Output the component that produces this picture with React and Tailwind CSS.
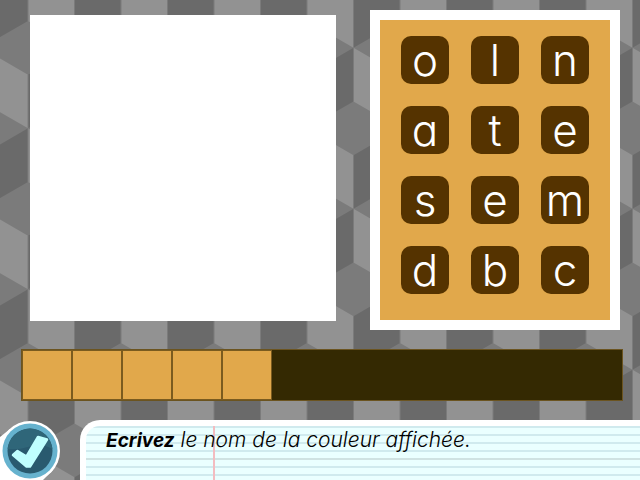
const ROWS = ["oln", "ate", "sem", "dbc"];
const CELLS = 12;
const FILLED = 5;
const LINES = [0, 8, 16, 24, 32, 40, 48];

function CubeBackdrop() {
  return (
    <svg className="absolute inset-0 -z-10 h-full w-full" aria-hidden="true">
      <defs>
        <pattern id="cubes" width="93" height="161" x="28" y="21" patternUnits="userSpaceOnUse">
          <rect width="93" height="161" fill="#7b7b7b" />
          <g fill="#6a6a6a">
            <path d="M0 53.7L46.5 26.8V80.5L0 107.3Z" />
            <path d="M46.5 134.2L93 107.3V161L46.5 187.8Z" />
            <path d="M46.5 -26.8L93 -53.7V0L46.5 26.8Z" />
          </g>
          <g fill="#929292">
            <path d="M46.5 26.8L93 53.7V107.3L46.5 80.5Z" />
            <path d="M0 107.3L46.5 134.2V187.8L0 161Z" />
            <path d="M0 -53.7L46.5 -26.8V26.8L0 0Z" />
          </g>
          <path
            d="M46.5 26.8V80.5M46.5 134.2V161M46.5 0V26.8M0 53.7V161M93 53.7V161"
            stroke="#7b7b7b"
            strokeWidth="1"
          />
        </pattern>
      </defs>
      <rect width="100%" height="100%" fill="url(#cubes)" />
    </svg>
  );
}

function CheckIcon() {
  return (
    <svg viewBox="0 0 60 60" className="block h-[60px] w-[60px]" aria-hidden="true">
      <path d="M0 17L10 9L53 50L43 60H0Z" fill="#fff" />
      <circle cx="30" cy="31" r="30" fill="#fff" />
      <circle cx="30" cy="31" r="27.5" fill="#66b2ce" />
      <circle cx="30" cy="31" r="22.5" fill="#295a6f" />
      <path d="M7.6 29A22.5 22.5 0 0 1 52.4 29Q40 22 28 27Q18 30 7.6 29Z" fill="#2f6679" />
      <path
        d="M13 35L17.5 31L26.5 36.5L38 17L47 19.5L30 46.5L26.5 46.5Z"
        fill="#bfffff"
        stroke="#bfffff"
        strokeWidth="2.5"
        strokeLinejoin="round"
      />
    </svg>
  );
}

export default function App() {
  return (
    <main className="relative isolate flex min-h-screen flex-col overflow-hidden font-['Century_Gothic','URW_Gothic',Inter,sans-serif] [font-feature-settings:'cv11']">
      <CubeBackdrop />

      <div className="flex items-start justify-between pt-[10px] pr-5 pl-[30px]">
        <div className="mt-[5px] h-[306px] w-[306px] bg-white" role="img" aria-label="Couleur" />
        <div className="grid grid-cols-3 gap-[22px] border-10 border-white bg-[#e1a84b] px-[21px] pt-4 pb-[26px]">
          {ROWS.join("").split("").map((letter, i) => (
            <button
              key={i}
              type="button"
              className="flex h-12 w-12 justify-center rounded-[10px] bg-[#553300] text-[44px] leading-[48px] font-light text-white"
            >
              {letter}
            </button>
          ))}
        </div>
      </div>

      <div className="mt-[19px] mr-[17px] ml-[21px] grid h-[52px] grid-cols-12 border border-[#6b5420] bg-[#342902]">
        {Array.from({ length: CELLS }, (_, i) => (
          <div key={i} className={i < FILLED ? "border border-[#7a5b1f] bg-[#e1a84b]" : ""} />
        ))}
      </div>

      <footer className="mt-auto flex h-[60px] gap-5">
        <button type="button" aria-label="Valider" className="shrink-0">
          <CheckIcon />
        </button>
        <div className="flex-1 rounded-tl-[20px] bg-white pt-[6px] pl-[6px]">
          <div className="relative h-full overflow-hidden rounded-tl-[14px] bg-[#eaffff]">
            {LINES.map((y) => (
              <div
                key={y}
                className={y === 32 ? "mb-[6px] h-[2px] bg-[#cfe2e2]" : "mb-[6px] h-[2px] bg-[#d0eaee]"}
              />
            ))}
            <div className="absolute inset-y-0 left-[127px] w-[2px] bg-[#f3bcc0]" />
            <p className="absolute top-0 left-5 text-[21px] leading-7 font-light whitespace-nowrap text-black italic">
              <b className="text-[19px] font-bold">Ecrivez</b> le nom de la couleur affichée.
            </p>
          </div>
        </div>
      </footer>
    </main>
  );
}
